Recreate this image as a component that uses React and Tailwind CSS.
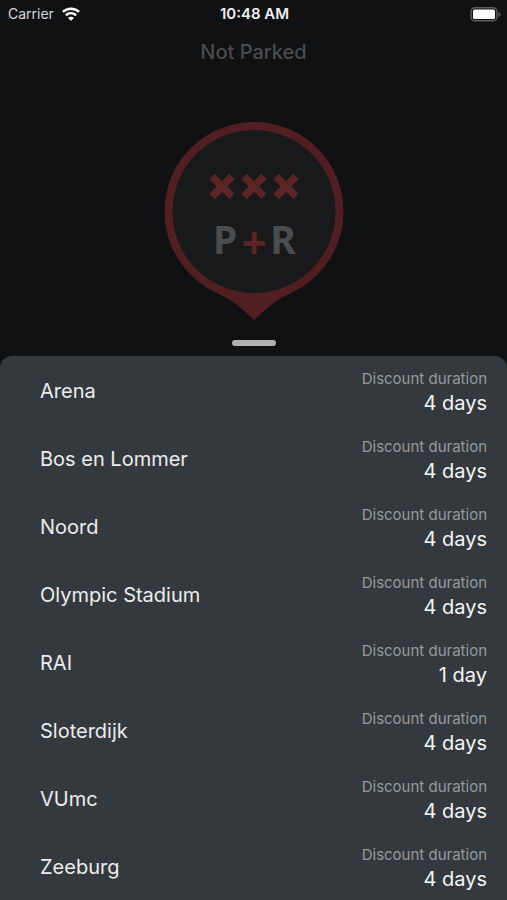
import React from "react";

const locations = [
    { name: "Arena", duration: "4 days" },
    { name: "Bos en Lommer", duration: "4 days" },
    { name: "Noord", duration: "4 days" },
    { name: "Olympic Stadium", duration: "4 days" },
    { name: "RAI", duration: "1 day" },
    { name: "Sloterdijk", duration: "4 days" },
    { name: "VUmc", duration: "4 days" },
    { name: "Zeeburg", duration: "4 days" },
];

function WifiIcon() {
    return (
        <svg width="18" height="14" viewBox="0 0 18 14" fill="none" stroke="#fff" strokeWidth="2.5" aria-hidden="true">
            <path d="M0.9 4.9C5.4 0.6 12.6 0.6 17.1 4.9" />
            <path d="M3.9 8.2C6.9 5.5 11.1 5.5 14.1 8.2" />
            <path d="M9 13.8L6 10.9C7.7 9.3 10.3 9.3 12 10.9Z" fill="#fff" stroke="none" />
        </svg>
    );
}

function BatteryIcon() {
    return (
        <svg width="31" height="15" viewBox="0 0 31 15" aria-hidden="true">
            <rect x="1" y="0.8" width="26" height="13" rx="4" fill="none" stroke="#5c5d5f" strokeWidth="1.5" />
            <rect x="3" y="2.5" width="22" height="9.5" rx="1.5" fill="#fff" />
            <path d="M28.5 5C31.2 6 31.2 9 28.5 10Z" fill="#5c5d5f" />
        </svg>
    );
}

function ParkingPin() {
    return (
        <svg width="180" height="199" viewBox="0 0 180 199" role="img" aria-label="P+R">
            <path
                d="M90 198C79 188 70 179 57 173C47 168 38 164 27 153A89.5 89.5 0 1 1 153 153C142 164 133 168 123 173C110 179 101 188 90 198Z"
                fill="#511f21"
            />
            <circle cx="90" cy="89.5" r="81.5" fill="#17191a" />
            {/* Amsterdam crosses */}
            <g stroke="#5c2524" strokeWidth="7.5">
                <path d="M48 54.5L68 74.5M68 54.5L48 74.5" />
                <path d="M80 54.5L100 74.5M100 54.5L80 74.5" />
                <path d="M112 54.5L132 74.5M132 54.5L112 74.5" />
            </g>
            <g fontFamily="'Noto Sans', 'Open Sans', sans-serif" fontSize="39" fontWeight="700" textAnchor="middle">
                <text x="61" y="132" fill="#4b4c4d">P</text>
                <text x="90" y="137" fontSize="44" fill="#5c2524">+</text>
                <text x="119" y="132" fill="#4b4c4d">R</text>
            </g>
        </svg>
    );
}

function LocationRow({ name, duration }) {
    return (
        <li className="flex h-[68px] items-center justify-between pt-0.5 pl-10 pr-5">
            <span className="text-xl leading-6 text-[#eceded]">{name}</span>
            <div className="flex flex-col items-end">
                <span className="text-[15px] leading-6 text-[#96999c]">Discount duration</span>
                <span className="text-xl leading-6 text-[#f5f5f5]">{duration}</span>
            </div>
        </li>
    );
}

function App() {
    return (
        <div className="flex min-h-screen flex-col bg-[#101113] font-['Inter',sans-serif]">
            <header className="grid grid-cols-3 items-center pt-1 pl-2 pr-1.5">
                <div className="flex items-center gap-2 text-sm text-[#d8d8d8]">
                    <span>Carrier</span>
                    <WifiIcon />
                </div>
                <span className="text-center text-[15px] leading-5 font-semibold text-[#f0f0f0]">10:48 AM</span>
                <div className="flex justify-end">
                    <BatteryIcon />
                </div>
            </header>

            <main className="flex flex-1 flex-col">
                <h1 className="mt-3.5 text-center text-xl leading-7 font-medium text-[#4a4b4c]">Not Parked</h1>
                <div className="mt-14 flex justify-center">
                    <ParkingPin />
                </div>
                <div className="mx-auto mt-[19px] h-1.5 w-11 rounded-full bg-[#b1b2b3]" />
                <ul className="mt-2.5 flex-1 rounded-t-xl bg-[#34393e]">
                    {locations.map((location) => (
                        <LocationRow key={location.name} name={location.name} duration={location.duration} />
                    ))}
                </ul>
            </main>
        </div>
    );
}

export default App;
